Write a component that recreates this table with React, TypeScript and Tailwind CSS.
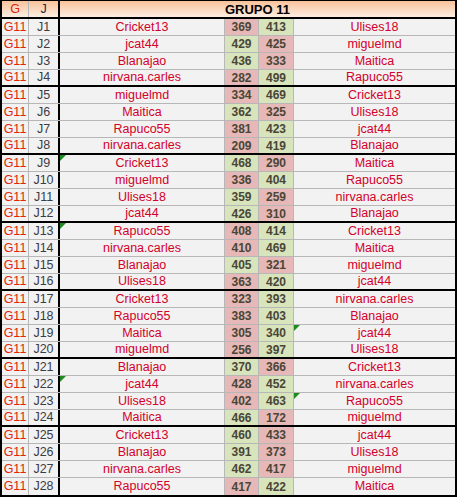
import React from "react";

type Match = {
  j: number;
  home: string;
  a: number;
  b: number;
  away: string;
  markHome?: boolean;
  markAway?: boolean;
};

const matches: Match[] = [
  { j: 1, home: "Cricket13", a: 369, b: 413, away: "Ulises18" },
  { j: 2, home: "jcat44", a: 429, b: 425, away: "miguelmd" },
  { j: 3, home: "Blanajao", a: 436, b: 333, away: "Maitica" },
  { j: 4, home: "nirvana.carles", a: 282, b: 499, away: "Rapuco55" },
  { j: 5, home: "miguelmd", a: 334, b: 469, away: "Cricket13" },
  { j: 6, home: "Maitica", a: 362, b: 325, away: "Ulises18" },
  { j: 7, home: "Rapuco55", a: 381, b: 423, away: "jcat44" },
  { j: 8, home: "nirvana.carles", a: 209, b: 419, away: "Blanajao" },
  { j: 9, home: "Cricket13", a: 468, b: 290, away: "Maitica", markHome: true },
  { j: 10, home: "miguelmd", a: 336, b: 404, away: "Rapuco55" },
  { j: 11, home: "Ulises18", a: 359, b: 259, away: "nirvana.carles" },
  { j: 12, home: "jcat44", a: 426, b: 310, away: "Blanajao" },
  { j: 13, home: "Rapuco55", a: 408, b: 414, away: "Cricket13", markHome: true },
  { j: 14, home: "nirvana.carles", a: 410, b: 469, away: "Maitica" },
  { j: 15, home: "Blanajao", a: 405, b: 321, away: "miguelmd" },
  { j: 16, home: "Ulises18", a: 363, b: 420, away: "jcat44" },
  { j: 17, home: "Cricket13", a: 323, b: 393, away: "nirvana.carles" },
  { j: 18, home: "Rapuco55", a: 383, b: 403, away: "Blanajao" },
  { j: 19, home: "Maitica", a: 305, b: 340, away: "jcat44", markAway: true },
  { j: 20, home: "miguelmd", a: 256, b: 397, away: "Ulises18" },
  { j: 21, home: "Blanajao", a: 370, b: 366, away: "Cricket13" },
  { j: 22, home: "jcat44", a: 428, b: 452, away: "nirvana.carles", markHome: true },
  { j: 23, home: "Ulises18", a: 402, b: 463, away: "Rapuco55", markAway: true },
  { j: 24, home: "Maitica", a: 466, b: 172, away: "miguelmd" },
  { j: 25, home: "Cricket13", a: 460, b: 433, away: "jcat44" },
  { j: 26, home: "Blanajao", a: 391, b: 373, away: "Ulises18" },
  { j: 27, home: "nirvana.carles", a: 462, b: 417, away: "miguelmd" },
  { j: 28, home: "Rapuco55", a: 417, b: 422, away: "Maitica" },
];

function Mark() {
  return (
    <svg width="6" height="6" viewBox="0 0 6 6" className="absolute left-0 top-0" aria-hidden="true">
      <path d="M0 0h6L0 6z" fill="#1f8a1f" />
    </svg>
  );
}

function Row({ m, last }: { m: Match; last: boolean }) {
  const groupEnd = m.j % 4 === 0;
  const rowBorder = groupEnd
    ? "border-b-2 border-black"
    : "border-b border-[#b7b7b7]";
  const win = "bg-[#d8e4bc]";
  const lose = "bg-[#e6b8b7]";
  return (
    <div className={`flex h-[17px] ${last ? "" : rowBorder}`}>
      <div className="flex w-[27px] items-center justify-center border-r border-[#b7b7b7] text-[#e0250c]">
        G11
      </div>
      <div className="flex w-[31px] items-center justify-center border-r-2 border-black text-[#3c3c44]">
        J{m.j}
      </div>
      <div className="relative flex w-[165px] items-center justify-center border-r border-[#b7b7b7] text-[#d3002a]">
        {m.markHome && <Mark />}
        {m.home}
      </div>
      <div
        className={`flex w-[34px] items-center justify-center border-r border-[#b7b7b7] text-[12px] font-bold text-[#4a4636] ${
          m.a > m.b ? win : lose
        }`}
      >
        {m.a}
      </div>
      <div
        className={`flex w-[35px] items-center justify-center border-r border-[#b7b7b7] text-[12px] font-bold text-[#4a4636] ${
          m.b > m.a ? win : lose
        }`}
      >
        {m.b}
      </div>
      <div className="relative flex flex-1 items-center justify-center text-[#d3002a]">
        {m.markAway && <Mark />}
        {m.away}
      </div>
    </div>
  );
}

export default function App() {
  return (
    <div className="h-[497px] w-[460px] bg-white">
      <div className="w-[457px] border-2 border-t border-black bg-[#f2f2f2] font-['Liberation_Sans',Arial,sans-serif] text-[12.5px] leading-none [&_*]:box-border">
        <div className="flex h-[18px] border-b-2 border-black bg-gradient-to-b from-[#f8c29a] to-[#fdede2]">
          <div className="flex w-[27px] items-center justify-center border-r border-[#b7b7b7] text-[#e0250c]">
            G
          </div>
          <div className="flex w-[31px] items-center justify-center border-r-2 border-black text-[#2a2a3a]">
            J
          </div>
          <div className="flex flex-1 items-center justify-center text-[13px] font-bold text-black">
            GRUPO 11
          </div>
        </div>
        {matches.map((m, i) => (
          <Row key={m.j} m={m} last={i === matches.length - 1} />
        ))}
      </div>
    </div>
  );
}
